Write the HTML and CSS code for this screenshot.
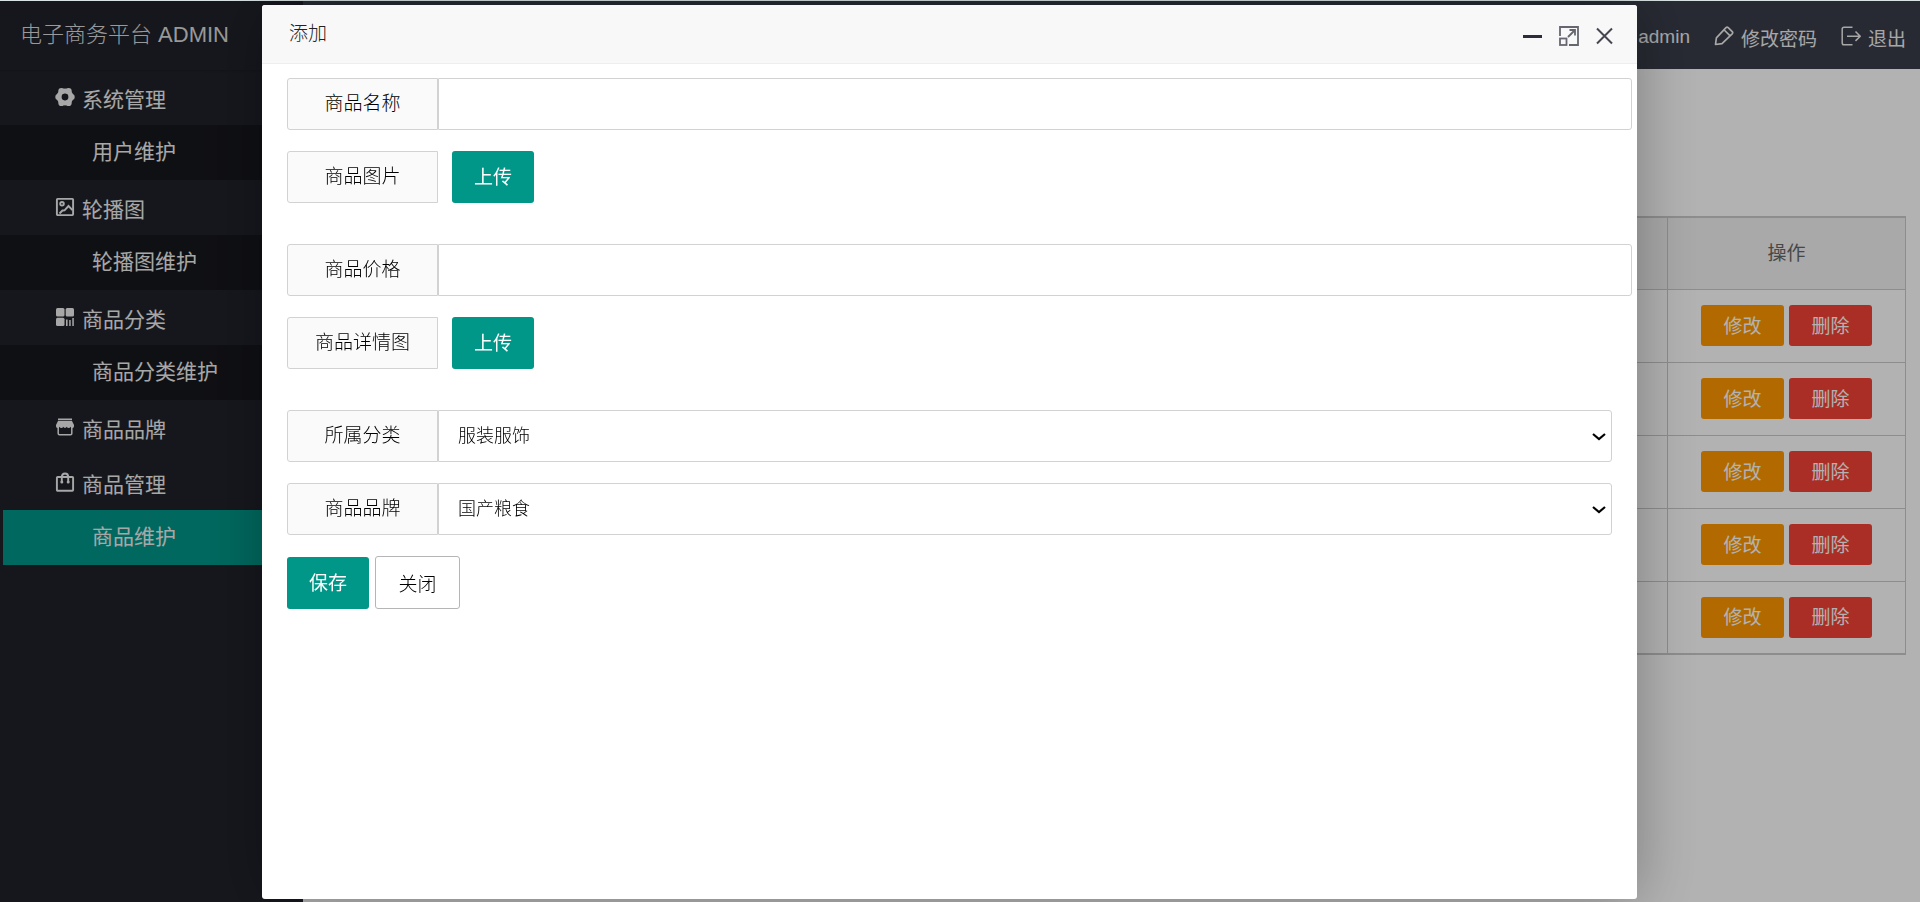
FILE: index.html
```html
<!DOCTYPE html>
<html lang="zh-CN">
<head>
    <meta charset="UTF-8">
    <meta name="viewport" content="width=device-width, initial-scale=1.0">
    <title>电子商务平台 ADMIN</title>
    <link rel="stylesheet" href="styles.css">
</head>
<body>

    <div class="layout">
        <!-- Side menu -->
        <aside class="side">
            <div class="logo">电子商务平台 ADMIN</div>
            <nav class="menu">
                <a class="menu-item" href="#">
                    <svg class="icon" viewBox="0 0 20 20" fill="currentColor"><circle cx="10" cy="10" r="5.900" fill="none" stroke="currentColor" stroke-width="5"/><circle cx="3.200" cy="10" r="2.900"/><circle cx="16.800" cy="10" r="2.900"/><circle cx="6.400" cy="4.100" r="3.100"/><circle cx="13.600" cy="4.100" r="3.100"/><circle cx="6.400" cy="15.900" r="3.100"/><circle cx="13.600" cy="15.900" r="3.100"/></svg>
                    <span>系统管理</span>
                </a>
                <a class="menu-child" href="#">用户维护</a>
                <a class="menu-item" href="#">
                    <svg class="icon" viewBox="0 0 20 20" fill="none" stroke="currentColor" stroke-width="1.900"><rect x="1.900" y="1.900" width="16.200" height="16.200" rx=".8"/><circle cx="7" cy="6.800" r="1.800"/><path d="M4.500 16.500l3-3 2-.2 4-4.300 4 4.200"/></svg>
                    <span>轮播图</span>
                </a>
                <a class="menu-child" href="#">轮播图维护</a>
                <a class="menu-item" href="#">
                    <svg class="icon" viewBox="0 0 20 20" fill="currentColor"><rect x="1" y="1" width="8.500" height="8.500" rx="1.500"/><rect x="10.700" y="1" width="8.300" height="8.500" rx="1.500"/><rect x="1" y="10.700" width="8.500" height="8.300" rx="1.500"/><rect x="11" y="12.500" width="1.600" height="6.500"/><rect x="14.200" y="13" width="1.500" height="6"/><rect x="17.300" y="11" width="1.500" height="8"/></svg>
                    <span>商品分类</span>
                </a>
                <a class="menu-child" href="#">商品分类维护</a>
                <a class="menu-item" href="#">
                    <svg class="icon" viewBox="0 0 20 20"><path fill="currentColor" d="M3 1.500h14v1.700H3zM3 4h14l2 4v1.200a1.800 1.800 0 0 1-3.500.6 2 2 0 0 1-3.700 0 2 2 0 0 1-3.600 0 2 2 0 0 1-3.700 0A1.800 1.800 0 0 1 1 9.200V8z"/><path fill="none" stroke="currentColor" stroke-width="1.500" d="M3.200 10v6.600q0 1.200 1.200 1.200h11.200q1.200 0 1.200-1.200V10"/></svg>
                    <span>商品品牌</span>
                </a>
                <a class="menu-item" href="#">
                    <svg class="icon" viewBox="0 0 20 20" fill="none" stroke="currentColor" stroke-width="1.900"><rect x="1.900" y="5" width="16.200" height="13.700" rx=".8"/><path d="M6.800 10V5q0-3.500 3.200-3.500T13.200 5v5"/><g fill="currentColor" stroke="none"><circle cx="6.800" cy="10" r="1.500"/><circle cx="13.200" cy="10" r="1.500"/></g></svg>
                    <span>商品管理</span>
                </a>
                <a class="menu-child active" href="#">商品维护</a>
            </nav>
        </aside>

        <div class="main">
            <!-- Top bar -->
            <header class="header">
                <a href="#">admin</a>
                <a href="#">
                    <svg class="icon-top" viewBox="0 0 20 20" fill="none" stroke="currentColor" stroke-width="1.700" stroke-linejoin="round"><path d="M1.500 18.500l.9-6.700L12 1.700q1.100-1 2.200 0l4 3.900q1 1.100 0 2.200L8 17.600zM10.200 4l5.700 5.600"/></svg>
                    修改密码
                </a>
                <a href="#">
                    <svg class="icon-top" viewBox="0 0 20 20" fill="none" stroke="currentColor" stroke-width="1.500"><path d="M11.500 1.200H3q-1.800 0-1.800 1.800v14q0 1.800 1.800 1.800h8.500M6 10.200h13M14.500 5.500l4.700 4.700-4.700 4.700"/></svg>
                    退出
                </a>
            </header>

            <!-- Goods list -->
            <div class="content">
                <table class="goods">
                    <thead>
                        <tr><th></th><th class="col-action">操作</th></tr>
                    </thead>
                    <tbody>
                        <tr><td></td><td><div class="actions"><button class="btn-sm warm">修改</button><button class="btn-sm danger">删除</button></div></td></tr>
                        <tr><td></td><td><div class="actions"><button class="btn-sm warm">修改</button><button class="btn-sm danger">删除</button></div></td></tr>
                        <tr><td></td><td><div class="actions"><button class="btn-sm warm">修改</button><button class="btn-sm danger">删除</button></div></td></tr>
                        <tr><td></td><td><div class="actions"><button class="btn-sm warm">修改</button><button class="btn-sm danger">删除</button></div></td></tr>
                        <tr><td></td><td><div class="actions"><button class="btn-sm warm">修改</button><button class="btn-sm danger">删除</button></div></td></tr>
                    </tbody>
                </table>
            </div>
        </div>
    </div>

    <div class="shade"></div>

    <!-- Add dialog -->
    <div class="dialog" role="dialog" aria-labelledby="dialogTitle">
        <div class="dialog-title">
            <span id="dialogTitle">添加</span>
            <div class="dialog-tools">
                <button aria-label="最小化"><svg viewBox="0 0 20 20"><path d="M0 10.500h19" stroke="#2d2c3b" stroke-width="3"/></svg></button>
                <button aria-label="最大化"><svg viewBox="0 0 20 20" fill="none" stroke="#65666f" stroke-width="1.800"><path d="M1 10V1h18v18H10"/><rect x="1" y="12.500" width="6.500" height="6.500"/><path d="M9 11l7-7M10.500 4H16v5.500"/></svg></button>
                <button aria-label="关闭"><svg viewBox="0 0 20 20"><path d="M2 2.500l15 15M17 2.500l-15 15" stroke="#45464f" stroke-width="2"/></svg></button>
            </div>
        </div>

        <form class="form">
            <div class="form-item">
                <label for="goodsName">商品名称</label>
                <input type="text" id="goodsName">
            </div>
            <div class="form-item upload">
                <span class="label">商品图片</span>
                <button type="button" class="btn">上传</button>
            </div>
            <div class="form-item">
                <label for="goodsPrice">商品价格</label>
                <input type="text" id="goodsPrice">
            </div>
            <div class="form-item upload">
                <span class="label">商品详情图</span>
                <button type="button" class="btn">上传</button>
            </div>
            <div class="form-item">
                <label for="category">所属分类</label>
                <div class="select">
                    <select id="category"><option>服装服饰</option></select>
                    <svg class="arrow" viewBox="0 0 14 8"><path d="M1 1l6 5 6-5" fill="none" stroke="#000" stroke-width="2.200"/></svg>
                </div>
            </div>
            <div class="form-item">
                <label for="brand">商品品牌</label>
                <div class="select">
                    <select id="brand"><option>国产粮食</option></select>
                    <svg class="arrow" viewBox="0 0 14 8"><path d="M1 1l6 5 6-5" fill="none" stroke="#000" stroke-width="2.200"/></svg>
                </div>
            </div>
            <div class="form-buttons">
                <button type="button" class="btn">保存</button>
                <button type="button" class="btn primary">关闭</button>
            </div>
        </form>
    </div>

</body>
</html>
```

FILE: styles.css
```css
* {
    box-sizing: border-box;
    margin: 0;
    padding: 0;
}

body {
    font-family: "Liberation Sans", "Noto Sans CJK SC", sans-serif;
    font-size: 19px;
    color: #666;
    background: #fff;
    border-top: 1px solid #d9e2e4;
    overflow: hidden;
}

a {
    color: inherit;
    text-decoration: none;
}

button,
input,
select {
    font-family: inherit;
    font-size: inherit;
}

button {
    border: none;
    cursor: pointer;
}

.layout {
    display: flex;
    min-height: calc(100vh - 1px);
}

/* Side menu */
.side {
    width: 303px;
    flex-shrink: 0;
    background: #20222a;
    color: #f0f0f0;
}

.logo {
    height: 69px;
    padding-left: 20px;
    line-height: 68px;
    font-size: 22px;
    font-weight: 300;
    color: rgba(255, 255, 255, 0.85);
    box-shadow: 0 1px 2px rgba(0, 0, 0, 0.15);
}

.menu-item {
    display: flex;
    align-items: center;
    gap: 7px;
    height: 55px;
    padding-left: 55px;
    font-size: 21px;
}

.menu-item .icon {
    width: 20px;
    height: 20px;
    margin-bottom: 2px;
}

.menu-child {
    display: block;
    height: 55px;
    padding-left: 92px;
    line-height: 54px;
    font-size: 21px;
    background: rgba(0, 0, 0, 0.3);
}

.menu-child.active {
    margin-left: 3px;
    padding-left: 89px;
    background: #009688;
}

/* Top bar */
.main {
    flex: 1;
}

.header {
    display: flex;
    justify-content: flex-end;
    align-items: center;
    gap: 24px;
    height: 68px;
    padding: 4px 14px 0 0;
    background: #393d49;
    color: #f0f0f0;
}

.header a {
    display: flex;
    align-items: center;
    gap: 7px;
}

.icon-top {
    width: 20px;
    height: 20px;
    margin-bottom: 2px;
}

/* Goods list */
.content {
    padding: 147px 14px 0 19px;
}

.goods {
    width: 100%;
    table-layout: fixed;
    border-collapse: collapse;
    border: 1px solid #cacaca;
    border-width: 2px 1px;
}

.goods tr {
    height: 73px;
}

.goods thead tr {
    height: 72px;
}

.goods th,
.goods td {
    border: 1px solid #cacaca;
    font-weight: 400;
    text-align: center;
    vertical-align: middle;
}

.goods th {
    padding-bottom: 4px;
    background: #f2f2f2;
}

.goods .col-action {
    width: 238px;
}

.actions {
    display: flex;
    justify-content: center;
    gap: 5px;
}

.btn-sm {
    width: 83px;
    height: 41px;
    padding-bottom: 3px;
    border-radius: 3px;
    color: #fff;
}

.warm {
    background: #ff9800;
}

.danger {
    background: #f44336;
}

/* Dialog */
.shade {
    position: fixed;
    inset: 1px 0 0;
    background: rgba(0, 0, 0, 0.3);
}

.dialog {
    position: fixed;
    inset: 5px 283px 3px 262px;
    background: #fff;
    border-radius: 3px;
    box-shadow: 1px 1px 62px rgba(0, 0, 0, 0.3);
    color: #000;
    font-weight: 300;
}

.dialog-title {
    display: flex;
    justify-content: space-between;
    align-items: center;
    height: 59px;
    padding: 0 22px 0 27px;
    background: #f8f8f8;
    border-bottom: 1px solid #eee;
    border-radius: 3px 3px 0 0;
    color: #222;
}

#dialogTitle {
    padding-bottom: 5px;
}

.dialog-tools {
    display: flex;
    gap: 16px;
    padding-top: 3px;
}

.dialog-tools button {
    width: 20px;
    height: 20px;
    background: none;
}

.dialog-tools svg {
    display: block;
    width: 20px;
    height: 20px;
}

.form {
    display: flex;
    flex-direction: column;
    gap: 21px;
    padding: 14px 5px 0 25px;
}

.form-item {
    display: flex;
    height: 52px;
}

.form-item label,
.form-item .label {
    width: 151px;
    border: 1px solid #d2d2d2;
    border-radius: 3px 0 0 3px;
    background: #fafafa;
    line-height: 50px;
    text-align: center;
}

.form-item input,
.form-item select {
    flex: 1;
    border: 1px solid #d2d2d2;
    border-radius: 0 3px 3px 0;
    background: #fff;
    outline: none;
}

.form-item input {
    padding-left: 13px;
}

.select {
    position: relative;
    display: flex;
    flex: 1;
    margin-right: 20px;
}

.select .arrow {
    position: absolute;
    top: 23px;
    right: 6px;
    width: 14px;
    height: 8px;
    pointer-events: none;
}

.form-item select {
    appearance: none;
    padding-left: 19px;
    font-size: 18px;
    font-weight: 300;
    color: #000;
}

.upload {
    gap: 14px;
    margin-bottom: 20px;
}

.form-buttons {
    display: flex;
    align-items: center;
    gap: 6px;
}

.btn {
    width: 82px;
    height: 52px;
    padding-bottom: 3px;
    border-radius: 3px;
    background: #009688;
    color: #fff;
}

.btn.primary {
    width: 85px;
    height: 53px;
    padding-bottom: 1px;
    border: 1px solid #b5b5b5;
    background: #fff;
    color: #000;
    font-weight: 300;
}
```
